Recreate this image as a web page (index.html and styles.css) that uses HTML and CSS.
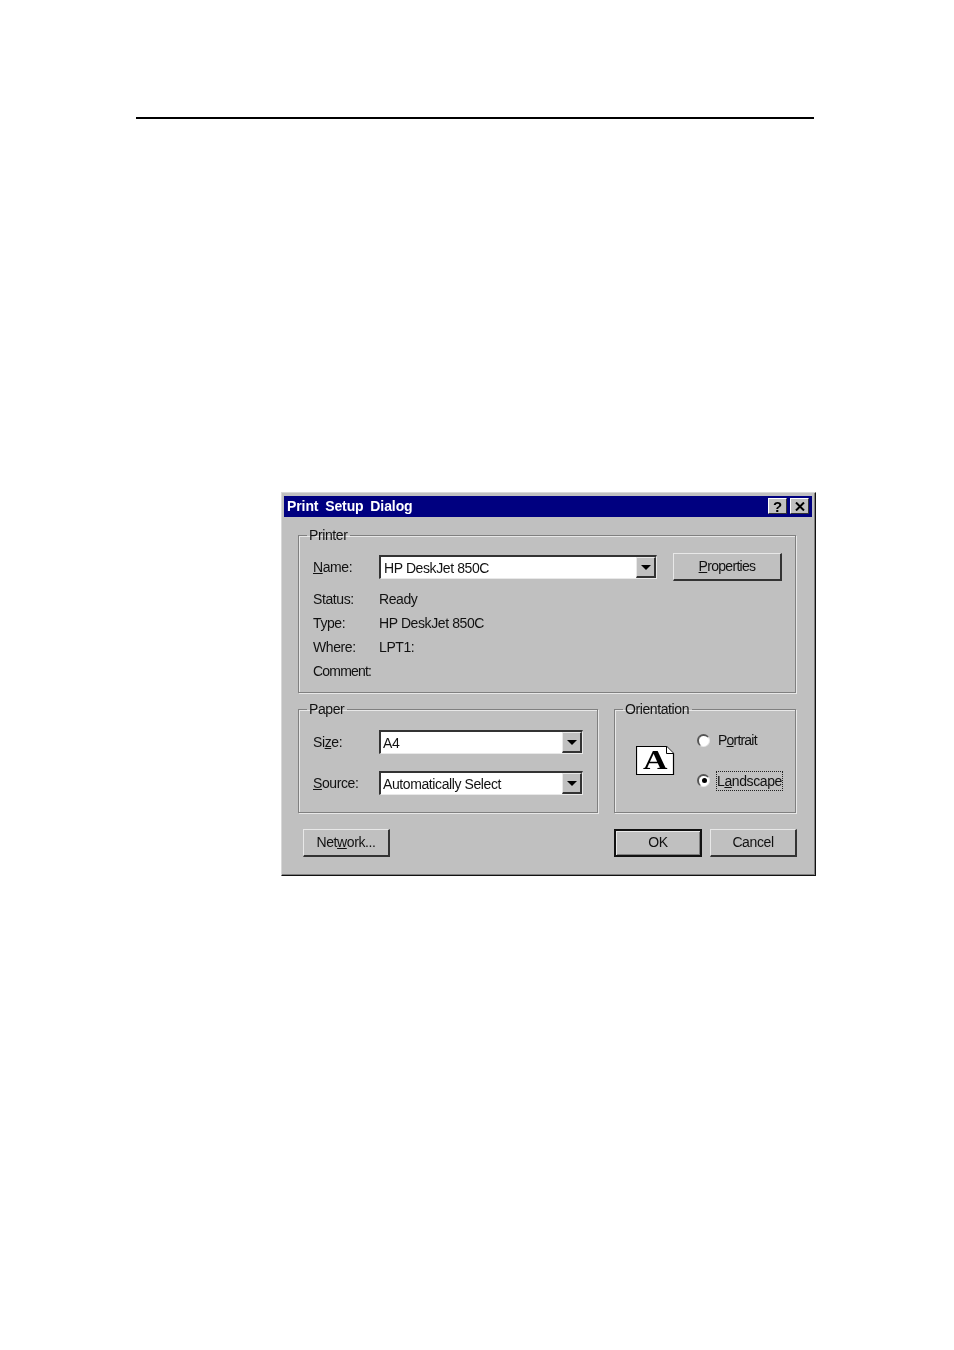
FILE: index.html
```html
<!DOCTYPE html>
<html lang="en">
<head>
    <meta charset="UTF-8">
    <title>Print Setup Dialog</title>
    <link rel="stylesheet" href="styles.css">
</head>
<body>
    <div class="pageRule"></div>
    <div class="dialog">
        <div class="titleBar">
            <span class="titleText">Print Setup Dialog</span>
            <div class="titleButtons">
                <span class="titleBtn">?</span>
                <span class="titleBtn">
                    <svg width="10" height="9" viewBox="0 0 10 9"><path d="M1 .5l8 8M9 .5l-8 8" fill="none" stroke="#000" stroke-width="2"/></svg>
                </span>
            </div>
        </div>
        <div class="dialogBody">
            <fieldset class="group printerGroup">
                <legend>Printer</legend>
                <div class="nameRow">
                    <span class="label"><u>N</u>ame:</span>
                    <div class="combo nameCombo">
                        <span class="comboText">HP DeskJet 850C</span>
                        <span class="comboArrow"><i></i></span>
                    </div>
                    <button class="btn propertiesBtn"><u>P</u>roperties</button>
                </div>
                <div class="infoGrid">
                    <span class="label">Status:</span><span>Ready</span>
                    <span class="label">Type:</span><span>HP DeskJet 850C</span>
                    <span class="label">Where:</span><span>LPT1:</span>
                    <span class="label tight">Comment:</span><span></span>
                </div>
            </fieldset>
            <div class="midRow">
                <fieldset class="group paperGroup">
                    <legend>Paper</legend>
                    <div class="paperRow">
                        <span class="label">Si<u>z</u>e:</span>
                        <div class="combo paperCombo">
                            <span class="comboText">A4</span>
                            <span class="comboArrow"><i></i></span>
                        </div>
                    </div>
                    <div class="paperRow">
                        <span class="label"><u>S</u>ource:</span>
                        <div class="combo paperCombo">
                            <span class="comboText">Automatically Select</span>
                            <span class="comboArrow"><i></i></span>
                        </div>
                    </div>
                </fieldset>
                <fieldset class="group orientGroup">
                    <legend>Orientation</legend>
                    <svg class="pageIcon" width="39" height="30" viewBox="0 0 39 30">
                        <path d="M.5.500H30.500L37.500 7.500V28.500H.5z" fill="#fff" stroke="#000" stroke-width="1.200"/>
                        <path d="M30.500.500V7.500H37.500" fill="#fff" stroke="#000"/>
                        <text x="7" y="23" textLength="24" lengthAdjust="spacingAndGlyphs" class="pageIconLetter">A</text>
                    </svg>
                    <div class="radioList">
                        <div class="radioRow">
                            <span class="radio"></span>
                            <span class="radioLabel tight">P<u>o</u>rtrait</span>
                        </div>
                        <div class="radioRow">
                            <span class="radio checked"></span>
                            <span class="radioLabel focused">L<u>a</u>ndscape</span>
                        </div>
                    </div>
                </fieldset>
            </div>
            <div class="buttonRow">
                <button class="btn networkBtn">Net<u>w</u>ork...</button>
                <div class="rightButtons">
                    <button class="btn defaultBtn">OK</button>
                    <button class="btn cancelBtn">Cancel</button>
                </div>
            </div>
        </div>
    </div>
</body>
</html>
```

FILE: styles.css
```css
*
{
    box-sizing: border-box;
}
body
{
    margin: 0px;
    background-color: #fff;
    font-family: "Liberation Sans", Arial, sans-serif;
    font-size: 14px;
    letter-spacing: -0.4px;
    color: #111;
}
u
{
    text-underline-offset: 1px;
}
.pageRule
{
    width: 678px;
    height: 2px;
    margin: 117px 0px 0px 136px;
    background-color: #000;
}
.dialog
{
    width: 535px;
    height: 384px;
    margin: 373px 0px 0px 281px;
    padding: 3px 3px 0px 2px;
    background-color: #c0c0c0;
    border-top: 1px solid #d8d8d8;
    border-left: 1px solid #d8d8d8;
    border-right: 1px solid #111;
    border-bottom: 1px solid #111;
    box-shadow: inset -1px -1px 0px #808080;
    filter: blur(0.4px);
}
.titleBar
{
    height: 21px;
    display: flex;
    align-items: center;
    justify-content: space-between;
    padding: 0px 3px 1px 3px;
    background-color: #000080;
    color: #fff;
}
.titleText
{
    font-weight: bold;
    letter-spacing: -0.1px;
    word-spacing: 3px;
}
.titleButtons
{
    display: flex;
    gap: 3px;
}
.titleBtn
{
    width: 19px;
    height: 16px;
    display: flex;
    align-items: center;
    justify-content: center;
    background-color: #c0c0c0;
    color: #000;
    font-weight: bold;
    font-size: 15px;
    border-top: 1px solid #fff;
    border-left: 1px solid #fff;
    border-right: 1px solid #333;
    border-bottom: 1px solid #333;
}
.dialogBody
{
    padding: 10px 16px 0px 14px;
}
.group
{
    margin: 0px;
    padding: 0px 14px 0px 14px;
    min-width: 0px;
    border: 1px solid #808080;
    box-shadow: 1px 1px 0px #e8e8e8, inset 1px 1px 0px #e8e8e8;
}
.group legend
{
    margin-left: -6px;
    padding: 0px 3px 0px 2px;
    height: 17px;
    line-height: 17px;
}
.printerGroup
{
    height: 166px;
    padding-right: 0px;
}
.nameRow
{
    display: flex;
    align-items: center;
    height: 28px;
    margin-top: 9px;
}
.label
{
    display: block;
    width: 66px;
    flex-shrink: 0;
}
.tight
{
    letter-spacing: -0.8px;
}
.combo
{
    height: 24px;
    flex-shrink: 0;
    display: flex;
    align-items: stretch;
    justify-content: space-between;
    background-color: #fff;
    border-top: 2px solid #333;
    border-left: 2px solid #333;
    border-right: 1px solid #e8e8e8;
    border-bottom: 1px solid #e8e8e8;
}
.comboText
{
    padding-left: 2px;
    align-self: center;
}
.nameCombo .comboText
{
    padding-left: 3px;
}
.comboArrow
{
    width: 20px;
    display: flex;
    align-items: center;
    justify-content: center;
    background-color: #c0c0c0;
    border-top: 1px solid #e8e8e8;
    border-left: 1px solid #e8e8e8;
    border-right: 2px solid #333;
    border-bottom: 2px solid #333;
}
.comboArrow i
{
    display: block;
    width: 0px;
    height: 0px;
    border-left: 5px solid transparent;
    border-right: 5px solid transparent;
    border-top: 5px solid #000;
}
.nameCombo
{
    width: 278px;
}
.btn
{
    width: 88px;
    height: 28px;
    padding: 0px 0px 2px 0px;
    font-family: inherit;
    font-size: 14px;
    letter-spacing: -0.4px;
    color: #111;
    background-color: #c0c0c0;
    border-top: 1px solid #e8e8e8;
    border-left: 1px solid #e8e8e8;
    border-right: 2px solid #333;
    border-bottom: 2px solid #333;
    border-radius: 0px;
}
.propertiesBtn
{
    width: 109px;
    margin-left: 16px;
    flex-shrink: 0;
    letter-spacing: -0.7px;
}
.infoGrid
{
    display: grid;
    grid-template-columns: 66px 1fr;
    grid-auto-rows: 24px;
    align-items: center;
    margin-top: 6px;
}
.midRow
{
    display: flex;
    gap: 16px;
    margin-top: 8px;
}
.paperGroup
{
    width: 300px;
    height: 112px;
}
.paperRow
{
    display: flex;
    align-items: center;
    margin-top: 12px;
    margin-bottom: 17px;
}
.paperRow + .paperRow
{
    margin-top: 0px;
}
.paperCombo
{
    width: 204px;
}
.orientGroup
{
    width: 182px;
    height: 112px;
    display: flex;
}
.pageIcon
{
    margin: 28px 0px 0px 7px;
    flex-shrink: 0;
}
.pageIconLetter
{
    font-family: "Liberation Serif", serif;
    font-weight: bold;
    font-size: 27px;
}
.radioList
{
    display: flex;
    flex-direction: column;
    gap: 20px;
    margin: 12px 0px 0px 22px;
}
.radioRow
{
    height: 20px;
    display: flex;
    align-items: center;
    gap: 7px;
    white-space: nowrap;
}
.radio
{
    width: 13px;
    height: 13px;
    flex-shrink: 0;
    display: flex;
    align-items: center;
    justify-content: center;
    border-radius: 50%;
    background-color: #fff;
    border-top: 2px solid #555;
    border-left: 2px solid #555;
    border-right: 1px solid #e8e8e8;
    border-bottom: 1px solid #e8e8e8;
}
.checked::after
{
    content: "";
    width: 5px;
    height: 5px;
    border-radius: 50%;
    background-color: #000;
}
.radioLabel
{
    padding: 0px 1px;
}
.focused
{
    height: 20px;
    margin: 2px 0px 0px -1px;
    padding: 0px;
    line-height: 18px;
    border: 1px dotted #222;
}
.buttonRow
{
    display: flex;
    justify-content: space-between;
    margin: 16px -1px 0px 0px;
    padding: 0px 0px 0px 5px;
}
.rightButtons
{
    display: flex;
    gap: 8px;
}
.networkBtn,
.cancelBtn
{
    width: 87px;
}
.defaultBtn
{
    border: 2px solid #111;
    box-shadow: inset 1px 1px 0px #e8e8e8, inset -1px -1px 0px #808080;
}
```
